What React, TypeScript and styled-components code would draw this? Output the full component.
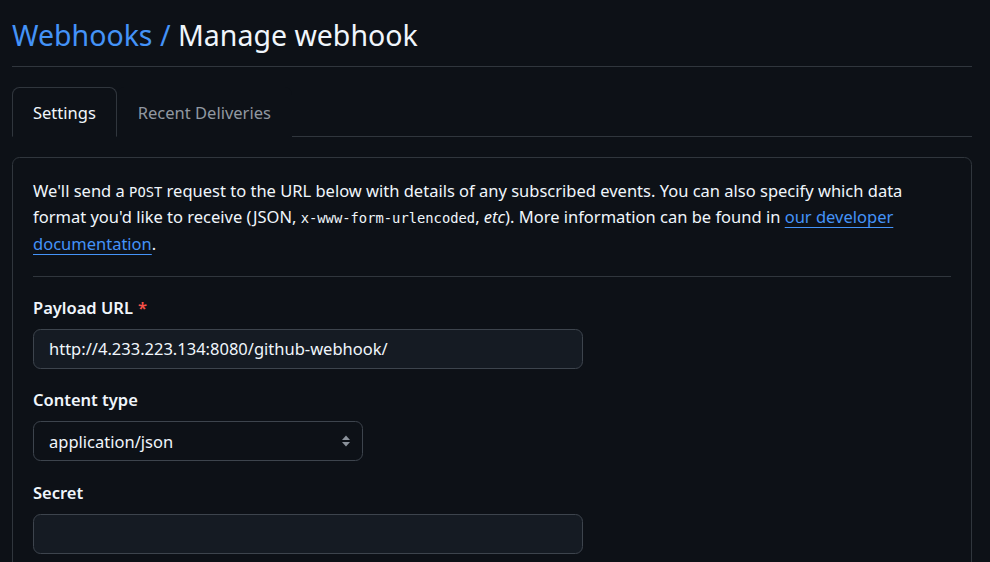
import React from "react";
import styled, { createGlobalStyle } from "styled-components";

const Global = createGlobalStyle`
  html, body { margin: 0; padding: 0; background: #0d1117; }
  body { font-family: "Noto Sans", "Open Sans", sans-serif; color: #f0f6fc; }
  * { box-sizing: border-box; }
`;

const Page = styled.div`
  padding: 0 18px 0 12px;
  width: 990px;
`;

const Header = styled.div`
  padding-top: 15px;
  padding-bottom: 11px;
  border-bottom: 1px solid #30363d;
`;

const Title = styled.h2`
  margin: 0;
  font-size: 28.5px;
  font-weight: 400;
  line-height: 40px;
  color: #f0f6fc;
`;

const Crumb = styled.a`
  color: #4493f8;
  text-decoration: none;
`;

const Tabs = styled.nav`
  display: flex;
  margin-top: 20px;
  border-bottom: 1px solid #30363d;
`;

const Tab = styled.div<{ $active?: boolean }>`
  height: 50px;
  display: flex;
  align-items: center;
  padding: 0 20px;
  font-size: 16.5px;
  margin-bottom: -1px;
  color: ${(p) => (p.$active ? "#f0f6fc" : "#9198a1")};
  background: #0d1117;
  border: 1px solid ${(p) => (p.$active ? "#30363d" : "transparent")};
  border-bottom-color: ${(p) => (p.$active ? "#0d1117" : "transparent")};
  border-radius: 7.5px 7.5px 0 0;
`;

const Box = styled.div`
  margin-top: 20px;
  border: 1px solid #30363d;
  border-radius: 7.5px;
  padding: 20px 20px 0 20px;
  height: 420px;
`;

const Intro = styled.p`
  margin: 0 0 19px 0;
  font-size: 16.5px;
  line-height: 26.25px;
`;

const Code = styled.code`
  font-family: "DejaVu Sans Mono", "Liberation Mono", monospace;
  font-size: 13.8px;
  line-height: 0;
`;

const Link = styled.a`
  color: #4493f8;
  text-decoration: underline;
  text-underline-offset: 4px;
  text-decoration-thickness: 1px;
`;

const Divider = styled.hr`
  margin: 0 0 18px 0;
  border: 0;
  border-top: 1px solid #30363d;
`;

const Field = styled.div`
  margin-bottom: 18.5px;
`;

const Label = styled.label`
  display: block;
  font-size: 16.5px;
  line-height: 26px;
  font-weight: 600;
  margin-bottom: 8px;
`;

const Required = styled.span`
  color: #f85149;
  margin-left: 5px;
`;

const Input = styled.div<{ $w: number }>`
  width: ${(p) => p.$w}px;
  height: 40px;
  border: 1px solid #3d444d;
  border-radius: 7.5px;
  background: #151b23;
  display: flex;
  align-items: center;
  padding: 0 15px;
  font-size: 16.5px;
  color: #f0f6fc;
`;

const Select = styled(Input)`
  background: #0d1117;
  justify-content: space-between;
  padding-right: 11px;
`;

const Arrows = () => (
  <svg width="10" height="14" viewBox="0 0 10 14">
    <path d="M1 6 L5 1.5 L9 6 Z" fill="#8b929b" />
    <path d="M1 8 L5 12.5 L9 8 Z" fill="#8b929b" />
  </svg>
);

export default function App() {
  return (
    <>
      <Global />
      <Page>
        <Header>
          <Title>
            <Crumb>Webhooks /</Crumb> Manage webhook
          </Title>
        </Header>
        <Tabs>
          <Tab $active>Settings</Tab>
          <Tab>Recent Deliveries</Tab>
        </Tabs>
        <Box>
          <Intro>
            We'll send a <Code>POST</Code> request to the URL below with details of any
            subscribed events. You can also specify which data format you'd like to receive
            (JSON, <Code>x-www-form-urlencoded</Code>, <em>etc</em>). More information can be
            found in <Link>our developer documentation</Link>.
          </Intro>
          <Divider />
          <Field>
            <Label>
              Payload URL<Required>*</Required>
            </Label>
            <Input $w={550}>http://4.233.223.134:8080/github-webhook/</Input>
          </Field>
          <Field>
            <Label>Content type</Label>
            <Select $w={330}>
              <span>application/json</span>
              <Arrows />
            </Select>
          </Field>
          <Field>
            <Label>Secret</Label>
            <Input $w={550} />
          </Field>
        </Box>
      </Page>
    </>
  );
}
